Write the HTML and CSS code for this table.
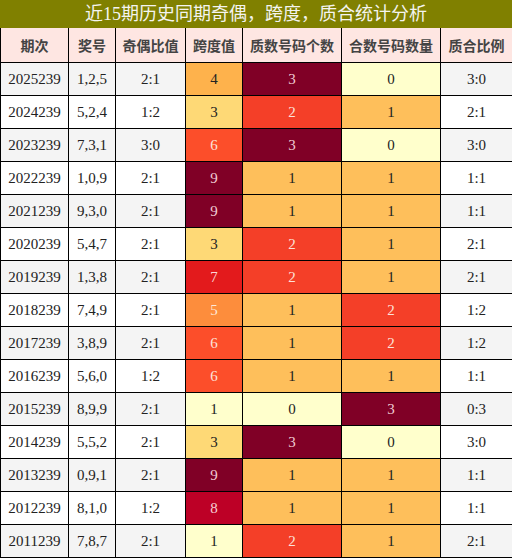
FILE: index.html
```html
<!DOCTYPE html>
<html lang="zh-CN">
<head>
  <meta charset="UTF-8">
  <meta name="viewport" content="width=device-width, initial-scale=1.0">
  <title>近15期历史同期奇偶，跨度，质合统计分析</title>
  <link rel="stylesheet" href="styles.css">
</head>
<body>

  <div class="stat-box">
    <div class="stat-title">近15期历史同期奇偶，跨度，质合统计分析</div>

    <table class="stat-table">
      <colgroup>
        <col class="w-issue">
        <col class="w-num">
        <col class="w-odd">
        <col class="w-span">
        <col class="w-prime">
        <col class="w-comp">
        <col class="w-ratio">
      </colgroup>
      <thead>
        <tr>
          <th>期次</th>
          <th>奖号</th>
          <th>奇偶比值</th>
          <th>跨度值</th>
          <th>质数号码个数</th>
          <th>合数号码数量</th>
          <th>质合比例</th>
        </tr>
      </thead>
      <tbody>
        <tr><td>2025239</td><td>1,2,5</td><td>2:1</td><td class="s4">4</td><td class="n3">3</td><td class="n0">0</td><td>3:0</td></tr>
        <tr><td>2024239</td><td>5,2,4</td><td>1:2</td><td class="s3">3</td><td class="n2">2</td><td class="n1">1</td><td>2:1</td></tr>
        <tr><td>2023239</td><td>7,3,1</td><td>3:0</td><td class="s6">6</td><td class="n3">3</td><td class="n0">0</td><td>3:0</td></tr>
        <tr><td>2022239</td><td>1,0,9</td><td>2:1</td><td class="s9">9</td><td class="n1">1</td><td class="n1">1</td><td>1:1</td></tr>
        <tr><td>2021239</td><td>9,3,0</td><td>2:1</td><td class="s9">9</td><td class="n1">1</td><td class="n1">1</td><td>1:1</td></tr>
        <tr><td>2020239</td><td>5,4,7</td><td>2:1</td><td class="s3">3</td><td class="n2">2</td><td class="n1">1</td><td>2:1</td></tr>
        <tr><td>2019239</td><td>1,3,8</td><td>2:1</td><td class="s7">7</td><td class="n2">2</td><td class="n1">1</td><td>2:1</td></tr>
        <tr><td>2018239</td><td>7,4,9</td><td>2:1</td><td class="s5">5</td><td class="n1">1</td><td class="n2">2</td><td>1:2</td></tr>
        <tr><td>2017239</td><td>3,8,9</td><td>2:1</td><td class="s6">6</td><td class="n1">1</td><td class="n2">2</td><td>1:2</td></tr>
        <tr><td>2016239</td><td>5,6,0</td><td>1:2</td><td class="s6">6</td><td class="n1">1</td><td class="n1">1</td><td>1:1</td></tr>
        <tr><td>2015239</td><td>8,9,9</td><td>2:1</td><td class="s1">1</td><td class="n0">0</td><td class="n3">3</td><td>0:3</td></tr>
        <tr><td>2014239</td><td>5,5,2</td><td>2:1</td><td class="s3">3</td><td class="n3">3</td><td class="n0">0</td><td>3:0</td></tr>
        <tr><td>2013239</td><td>0,9,1</td><td>2:1</td><td class="s9">9</td><td class="n1">1</td><td class="n1">1</td><td>1:1</td></tr>
        <tr><td>2012239</td><td>8,1,0</td><td>1:2</td><td class="s8">8</td><td class="n1">1</td><td class="n1">1</td><td>1:1</td></tr>
        <tr><td>2011239</td><td>7,8,7</td><td>2:1</td><td class="s1">1</td><td class="n2">2</td><td class="n1">1</td><td>2:1</td></tr>
      </tbody>
    </table>
  </div>

</body>
</html>
```

FILE: styles.css
```css
body {
  margin: 0;
  background-color: #fff;
  font-family: 'Liberation Serif', 'Noto Sans CJK SC', serif;
}

.stat-box {
  width: 512px;
}

.stat-title {
  height: 28px;
  line-height: 28px;
  background-color: #808000;
  color: #f4f4f0;
  font-size: 18px;
  text-align: center;
}

.stat-table {
  width: 512px;
  table-layout: fixed;
  border-collapse: collapse;
  color: #222;
  font-size: 15px;
  text-align: center;
}

.w-issue { width: 68px; }
.w-num { width: 47px; }
.w-odd { width: 70px; }
.w-span { width: 57px; }
.w-prime { width: 99px; }
.w-comp { width: 99px; }
.w-ratio { width: 72px; }

.stat-table th,
.stat-table td {
  border: 1px solid #000;
  padding: 0;
}

.stat-table th {
  height: 34px;
  border-top: none;
  background-color: #fee6e2;
  color: #444;
  font-family: 'Noto Sans CJK SC', sans-serif;
  font-size: 14px;
  font-weight: bold;
}

.stat-table td {
  height: 32px;
}

.stat-table tbody tr {
  background-color: #fff;
}

.stat-table tbody tr:nth-child(odd) {
  background-color: #f4f4f4;
}

/* 跨度值 heat colours */
.stat-table td.s1 { background-color: #ffffcc; }
.stat-table td.s3 { background-color: #fed976; }
.stat-table td.s4 { background-color: #feb24c; }
.stat-table td.s5 { background-color: #fd8d3c; color: #fde8d8; }
.stat-table td.s6 { background-color: #fc4e2a; color: #fde2da; }
.stat-table td.s7 { background-color: #e31a1c; color: #fbd8d8; }
.stat-table td.s8 { background-color: #bd0026; color: #f6d0d6; }
.stat-table td.s9 { background-color: #800026; color: #f0ccd4; }

/* 质数 / 合数 count colours */
.stat-table td.n0 { background-color: #ffffcc; }
.stat-table td.n1 { background-color: #febf5b; }
.stat-table td.n2 { background-color: #f43f28; color: #fde0da; }
.stat-table td.n3 { background-color: #800026; color: #f0ccd4; }
```
